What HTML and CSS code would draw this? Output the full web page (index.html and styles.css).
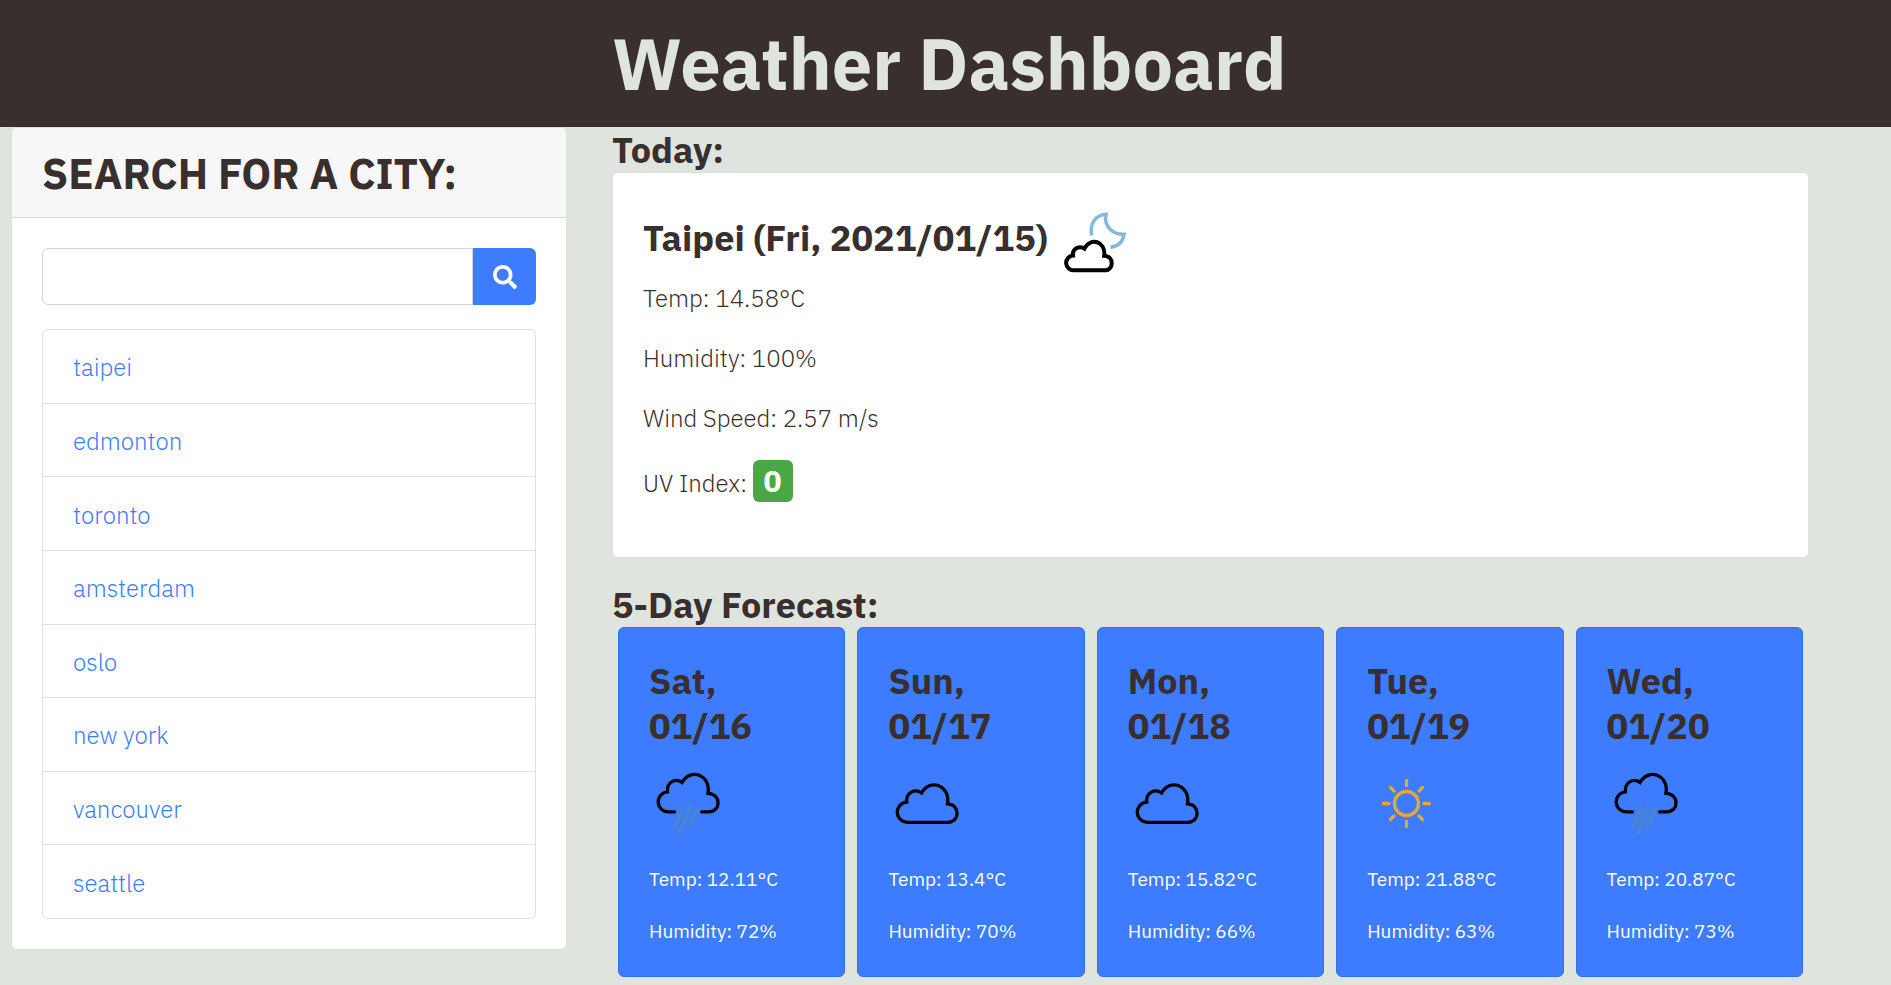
FILE: index.html
```html
<!DOCTYPE html>
<html lang="en">
<head>
<meta charset="utf-8">
<meta name="viewport" content="width=device-width, initial-scale=1">
<title>Weather Dashboard</title>
<link rel="stylesheet" href="styles.css">
</head>
<body>
<svg class="sprite" aria-hidden="true">
  <symbol id="rain" viewBox="0 0 75 75">
    <g fill="none" stroke-width="3.300" stroke-linecap="round">
      <path stroke="#000" d="M25.500 45.800H20A10 10 0 0 1 18.500 25.800C17.500 15.500 27 12 33 16.500C41 2 62 8 59 27.300C72.500 27.500 72 45.800 60 45.800H52.500"/>
      <path stroke="#4a87c6" d="M33.500 42l-7.500 18.500M41 42l-9.800 24.500M48 42l-7.500 18.500"/>
    </g>
  </symbol>
  <symbol id="cloud" viewBox="0 0 75 75">
    <path fill="none" stroke="#000" stroke-width="3.300" d="M20 56.300A10 10 0 0 1 18.700 36.200C17.700 26 27 22.500 33.500 27C41.500 12.500 62.500 18.500 59.500 37.800C72.500 38 72 56.300 60 56.300Z"/>
  </symbol>
  <symbol id="sun" viewBox="0 0 75 75">
    <g fill="none" stroke="#e9a536" stroke-width="3.300" stroke-linecap="round">
      <circle cx="39.500" cy="37.500" r="12"/>
      <path d="M39.500 14.500v5M39.500 55.500v5M16.500 37.500h5.500M57 37.500h5.500M23.500 21.500l3.500 3.500M52 50l3.500 3.500M55.500 21.500L52 25M27 50l-3.500 3.500"/>
    </g>
  </symbol>
  <symbol id="moon-cloud" viewBox="0 0 75 75">
    <path fill="none" stroke="#84bad7" stroke-width="3.500" d="M34.700 30.500C32.500 19 38 10 49 9.200C46.500 19 54 30 67 29.300C66 36 62 41.500 53.500 42.300"/>
    <path fill="none" stroke="#000" stroke-width="4" d="M17 65.300A7.300 7.300 0 0 1 16 50.600C15 43 23 40.500 27.500 43.500C33 32 49 36 47.200 50.700C57.500 51 56.500 65.300 48.500 65.300Z"/>
  </symbol>
</svg>
<header class="banner"><h1>Weather Dashboard</h1></header>
<main class="layout">
  <section class="card search">
    <h2 class="search-title">SEARCH FOR A CITY:</h2>
    <div class="search-body">
      <form class="search-form">
        <input type="text" class="search-input" aria-label="City">
        <button type="button" class="search-button" aria-label="Search">
          <svg class="search-icon" viewBox="0 0 512 512" aria-hidden="true"><path fill="currentColor" d="M505 442.700L405.300 343c-4.500-4.500-10.600-7-17-7H372c27.600-35.300 44-79.700 44-128C416 93.100 322.900 0 208 0S0 93.100 0 208s93.100 208 208 208c48.300 0 92.700-16.400 128-44v16.300c0 6.400 2.500 12.500 7 17l99.700 99.700c9.400 9.400 24.600 9.400 33.900 0l28.300-28.300c9.400-9.400 9.400-24.600.1-34zM208 336c-70.700 0-128-57.200-128-128 0-70.700 57.200-128 128-128 70.700 0 128 57.200 128 128 0 70.700-57.200 128-128 128z"/></svg>
        </button>
      </form>
      <ul class="cities">
        <li><a href="#">taipei</a></li>
        <li><a href="#">edmonton</a></li>
        <li><a href="#">toronto</a></li>
        <li><a href="#">amsterdam</a></li>
        <li><a href="#">oslo</a></li>
        <li><a href="#">new york</a></li>
        <li><a href="#">vancouver</a></li>
        <li><a href="#">seattle</a></li>
      </ul>
    </div>
  </section>
  <div class="weather">
    <section>
      <h2>Today:</h2>
      <div class="card today">
        <div class="today-head">
          <h3>Taipei (Fri, 2021/01/15)</h3>
          <svg class="icon" role="img" aria-label="Partly cloudy night"><use href="#moon-cloud"/></svg>
        </div>
        <p>Temp: 14.58°C</p>
        <p>Humidity: 100%</p>
        <p>Wind Speed: 2.57 m/s</p>
        <p>UV Index: <span class="badge">0</span></p>
      </div>
    </section>
    <section>
      <h2>5-Day Forecast:</h2>
      <div class="forecast">
        <article class="card day"><h3>Sat,<br>01/16</h3><svg class="icon" role="img" aria-label="Rain"><use href="#rain"/></svg><p>Temp: 12.11°C</p><p>Humidity: 72%</p></article>
        <article class="card day"><h3>Sun,<br>01/17</h3><svg class="icon" role="img" aria-label="Clouds"><use href="#cloud"/></svg><p>Temp: 13.4°C</p><p>Humidity: 70%</p></article>
        <article class="card day"><h3>Mon,<br>01/18</h3><svg class="icon" role="img" aria-label="Clouds"><use href="#cloud"/></svg><p>Temp: 15.82°C</p><p>Humidity: 66%</p></article>
        <article class="card day"><h3>Tue,<br>01/19</h3><svg class="icon" role="img" aria-label="Clear sky"><use href="#sun"/></svg><p>Temp: 21.88°C</p><p>Humidity: 63%</p></article>
        <article class="card day"><h3>Wed,<br>01/20</h3><svg class="icon" role="img" aria-label="Rain"><use href="#rain"/></svg><p>Temp: 20.87°C</p><p>Humidity: 73%</p></article>
      </div>
    </section>
  </div>
</main>
</body>
</html>
```
FILE: styles.css
```css
* {
  box-sizing: border-box;
}

body {
  margin: 0;
  background: #dfe4de;
  color: #382f2e;
  font-family: "IBM Plex Sans", Roboto, sans-serif;
  font-size: 24px;
  font-weight: 300;
  line-height: 36px;
}

h1, h2, h3, p, ul {
  margin: 0;
}

h2, h3 {
  font-size: 36px;
  font-weight: 700;
  line-height: 45px;
}

.sprite {
  position: absolute;
  width: 0;
  height: 0;
}

.banner,
.layout {
  display: grid;
  grid-template-columns: minmax(0, 556fr) minmax(0, 1197fr);
  column-gap: 45px;
  padding: 0 82px 0 11px;
}

.banner {
  background: #382f2e;
  color: #dfe4de;
}

.banner h1 {
  grid-column: 2;
  padding: 20px 0;
  font-size: 72px;
  font-weight: 700;
  line-height: 87px;
}

.card {
  background: #fff;
  border: 1px solid #dfdfdf;
  border-radius: 6px;
}

.search {
  align-self: start;
  overflow: hidden;
}

.search-title {
  padding: 20px 30px 17px;
  background: #f7f7f7;
  border-bottom: 1px solid #d8d8d8;
  font-size: 42px;
  line-height: 52px;
}

.search-body {
  padding: 30px;
}

.search-form {
  display: flex;
  height: 57px;
  margin-bottom: 24px;
}

.search-input {
  flex: 1;
  min-width: 0;
  padding: 9px 18px;
  border: 1px solid #ced4da;
  border-radius: 6px 0 0 6px;
  font: inherit;
}

.search-button {
  display: flex;
  align-items: center;
  justify-content: center;
  width: 63px;
  padding: 0;
  border: 0;
  border-radius: 0 6px 6px 0;
  background: #3d7cff;
  color: #fff;
}

.search-icon {
  width: 24px;
  height: 24px;
}

.cities {
  display: flex;
  flex-direction: column;
  min-height: 590px;
  padding: 0;
  border: 1px solid #dfdfdf;
  border-radius: 6px;
  list-style: none;
}

.cities li {
  display: flex;
  flex: 1;
  align-items: center;
  padding: 19px 30px 17px;
}

.cities li + li {
  border-top: 1px solid #dfdfdf;
}

.cities a {
  color: #3d7cff;
  text-decoration: none;
}

.weather {
  display: flex;
  flex-direction: column;
  gap: 24px;
}

.today {
  padding: 32px 30px 55px;
}

.today-head {
  display: flex;
  align-items: center;
  gap: 9px;
}

.today-head h3 {
  padding-bottom: 10px;
}

.icon {
  display: block;
  flex: none;
  width: 75px;
  height: 75px;
}

.today p + p {
  margin-top: 24px;
}

.badge {
  display: inline-block;
  padding: 0 11px;
  border-radius: 6px;
  background: #4ba746;
  color: #fff;
  font-size: 30px;
  font-weight: 700;
  line-height: 42px;
}

.forecast {
  display: grid;
  grid-template-columns: repeat(5, minmax(0, 1fr));
  gap: 12px;
  padding: 0 6px;
}

.day {
  padding: 30px 30px 31px;
  background: #3d7cff;
  border-color: #376fe0;
  color: #fff;
  font-size: 19px;
  font-weight: 400;
  line-height: 28px;
}

.day h3 {
  margin-bottom: 18px;
  color: #382f2e;
}

.day .icon {
  margin-bottom: 24px;
}

.day p + p {
  margin-top: 24px;
}
```
